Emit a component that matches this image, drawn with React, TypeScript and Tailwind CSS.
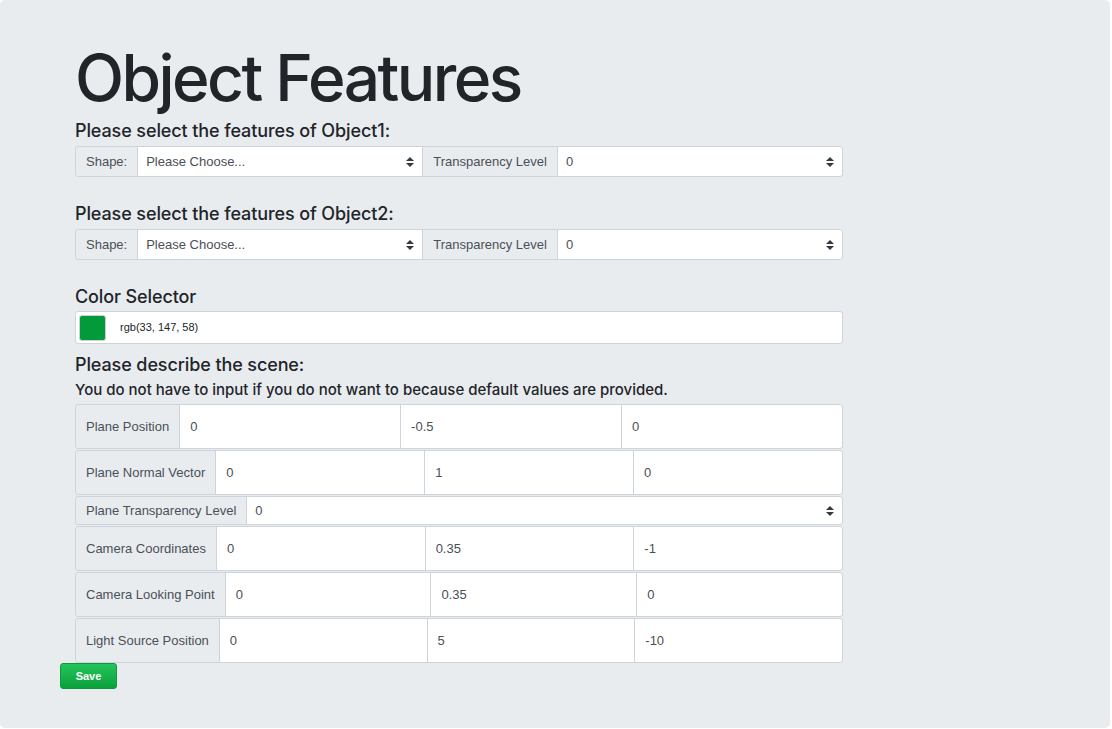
import React from 'react'

const font = { fontFamily: '"Liberation Sans", Arial, sans-serif' }
const inter = { fontFamily: 'Inter, "Liberation Sans", sans-serif' }

function Arrows() {
  return (
    <svg width="8" height="10" viewBox="0 0 8 10" className="shrink-0">
      <path d="M4 0 L8 4 H0 Z M4 10 L0 6 H8 Z" fill="#343a40" />
    </svg>
  )
}

function Select({ value, className = '' }) {
  return (
    <div className={`flex flex-1 items-center justify-between bg-white border border-[#ced4da] pl-[8px] pr-[8px] text-[13px] text-[#495057] ${className}`}>
      <span>{value}</span>
      <Arrows />
    </div>
  )
}

function Addon({ children, className = '' }) {
  return (
    <div className={`flex items-center bg-[#e9ecef] border border-[#ced4da] px-[10px] text-[13px] text-[#495057] whitespace-nowrap ${className}`}>
      {children}
    </div>
  )
}

function Heading({ children, className = '' }) {
  return (
    <h5 className={`text-[18px] leading-[23px] font-medium tracking-[-0.006em] text-[#212529] ${className}`} style={inter}>
      {children}
    </h5>
  )
}

function ObjectRow({ n }) {
  return (
    <>
      <Heading className="mb-[4px]">Please select the features of Object{n}:</Heading>
      <div className="flex h-[31px] w-[768px]">
        <Addon className="rounded-l-[3px]">Shape:</Addon>
        <Select value="Please Choose..." className="-ml-px" />
        <Addon className="-ml-px">Transparency Level</Addon>
        <Select value="0" className="-ml-px rounded-r-[3px]" />
      </div>
    </>
  )
}

function VectorRow({ label, values }) {
  return (
    <div className="flex h-[45px] w-[768px]">
      <Addon className="rounded-l-[3px]">{label}</Addon>
      {values.map((v, i) => (
        <div
          key={i}
          className={`flex flex-1 items-center bg-white border border-[#ced4da] -ml-px px-[10px] text-[13px] text-[#495057] ${i === 2 ? 'rounded-r-[3px]' : ''}`}
        >
          {v}
        </div>
      ))}
    </div>
  )
}

export default function App() {
  const rows = [
    { label: 'Plane Position', values: ['0', '-0.5', '0'] },
    { label: 'Plane Normal Vector', values: ['0', '1', '0'] },
  ]
  const rows2 = [
    { label: 'Camera Coordinates', values: ['0', '0.35', '-1'] },
    { label: 'Camera Looking Point', values: ['0', '0.35', '0'] },
    { label: 'Light Source Position', values: ['0', '5', '-10'] },
  ]
  return (
    <div className="bg-white min-h-[729px]" style={font}>
      <div className="w-[1110px] h-[728px] bg-[#e9ecef] rounded-[5px] pl-[75px] pt-[38px]">
        <h1 className="text-[64px] leading-[80px] font-medium text-[#212529] tracking-[-0.04em] mb-[1px]" style={inter}>
          Object Features
        </h1>

        <ObjectRow n={1} />
        <div className="h-[25px]" />
        <ObjectRow n={2} />

        <Heading className="mt-[25px] mb-[3px]">Color Selector</Heading>
        <div className="flex items-center h-[33px] w-[768px] bg-white border border-[#ced4da] rounded-[3px] pl-[3px]">
          <div className="w-[27px] h-[26px] rounded-[3px] bg-[#039a3c] border border-[#d0d0d0]" />
          <span className="ml-[14px] text-[11px] text-[#212529]">rgb(33, 147, 58)</span>
        </div>

        <Heading className="mt-[9px]">Please describe the scene:</Heading>
        <h6 className="text-[15px] leading-[19px] font-medium text-[#212529] mt-[4px] mb-[5px]" style={inter}>
          You do not have to input if you do not want to because default values are provided.
        </h6>

        <div className="flex flex-col gap-px">
          {rows.map(r => (
            <VectorRow key={r.label} {...r} />
          ))}
          <div className="flex h-[29px] w-[768px]">
            <Addon className="rounded-l-[3px]">Plane Transparency Level</Addon>
            <Select value="0" className="-ml-px rounded-r-[3px]" />
          </div>
          {rows2.map(r => (
            <VectorRow key={r.label} {...r} />
          ))}
        </div>

        <button className="-ml-[15px] w-[57px] h-[26px] rounded-[3px] border border-[#0e9a3c] bg-gradient-to-b from-[#22c55a] to-[#0aa03d] text-white text-[11px] font-bold">
          Save
        </button>
      </div>
    </div>
  )
}
